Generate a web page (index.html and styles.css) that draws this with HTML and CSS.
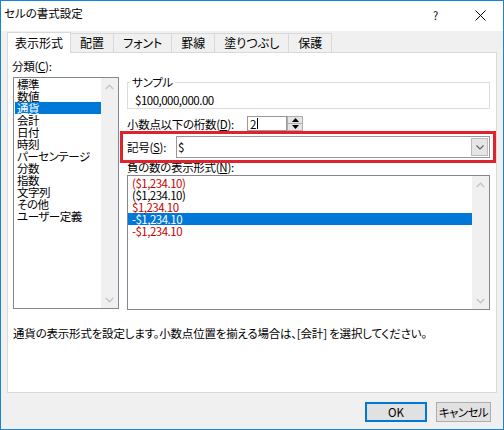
FILE: index.html
```html
<!DOCTYPE html>
<html lang="ja">
<head>
<meta charset="utf-8">
<title>セルの書式設定</title>
<link rel="stylesheet" href="styles.css">
</head>
<body>
<div class="window">
  <div class="titlebar">
    <span class="title">セルの書式設定</span>
    <span class="tb-btn help">?</span>
    <span class="tb-btn close"><svg width="11" height="11" viewBox="0 0 11 11"><path d="M0.5 0.5 L10.5 10.5 M10.5 0.5 L0.5 10.5" stroke="#000" stroke-width="1" fill="none"/></svg></span>
  </div>
  <div class="client">
    <div class="tabs">
      <div class="tab active">表示形式</div>
      <div class="tab">配置</div>
      <div class="tab">フォント</div>
      <div class="tab">罫線</div>
      <div class="tab">塗りつぶし</div>
      <div class="tab">保護</div>
    </div>
    <div class="panel">
      <div class="panel-main">
        <div class="col-left">
          <div class="label">分類(<u>C</u>):</div>
          <div class="listbox cat-list">
            <div class="items">
              <div class="item">標準</div>
              <div class="item">数値</div>
              <div class="item selected">通貨</div>
              <div class="item">会計</div>
              <div class="item">日付</div>
              <div class="item">時刻</div>
              <div class="item">パーセンテージ</div>
              <div class="item">分数</div>
              <div class="item">指数</div>
              <div class="item">文字列</div>
              <div class="item">その他</div>
              <div class="item">ユーザー定義</div>
            </div>
            <div class="scrollbar">
              <span class="arrow"><svg width="9" height="6" viewBox="0 0 9 6"><path d="M0.8 5 L4.5 1.3 L8.2 5" stroke="#c4c4c4" stroke-width="1.4" fill="none"/></svg></span>
              <span class="arrow"><svg width="9" height="6" viewBox="0 0 9 6"><path d="M0.8 1 L4.5 4.7 L8.2 1" stroke="#c4c4c4" stroke-width="1.4" fill="none"/></svg></span>
            </div>
          </div>
        </div>
        <div class="col-right">
          <fieldset class="sample">
            <legend>サンプル</legend>
            <div class="sample-value num">$100,000,000.00</div>
          </fieldset>
          <div class="row decimals">
            <span class="row-label decimals-label">小数点以下の桁数(<u>D</u>):</span>
            <div class="spin-input">2<span class="caret"></span></div>
            <div class="spin-buttons">
              <span class="spin-btn"><svg width="7" height="4" viewBox="0 0 7 4"><path d="M0 4 L3.5 0 L7 4 Z" fill="#000"/></svg></span>
              <span class="spin-btn"><svg width="7" height="4" viewBox="0 0 7 4"><path d="M0 0 L3.5 4 L7 0 Z" fill="#000"/></svg></span>
            </div>
          </div>
          <div class="row symbol highlight">
            <span class="row-label symbol-label">記号(<u>S</u>):</span>
            <div class="combo">
              <span class="combo-text">$</span>
              <span class="combo-btn"><svg width="8" height="5" viewBox="0 0 8 5"><path d="M0.5 0.5 L4 4 L7.5 0.5" stroke="#606060" stroke-width="1.1" fill="none"/></svg></span>
            </div>
          </div>
          <div class="label neg-label">負の数の表示形式(<u>N</u>):</div>
          <div class="listbox neg-list">
            <div class="items">
              <div class="item num red">($1,234.10)</div>
              <div class="item num">($1,234.10)</div>
              <div class="item num red">$1,234.10</div>
              <div class="item num selected">-$1,234.10</div>
              <div class="item num red">-$1,234.10</div>
            </div>
            <div class="scrollbar">
              <span class="arrow"><svg width="9" height="6" viewBox="0 0 9 6"><path d="M0.8 5 L4.5 1.3 L8.2 5" stroke="#c4c4c4" stroke-width="1.4" fill="none"/></svg></span>
              <span class="arrow"><svg width="9" height="6" viewBox="0 0 9 6"><path d="M0.8 1 L4.5 4.7 L8.2 1" stroke="#c4c4c4" stroke-width="1.4" fill="none"/></svg></span>
            </div>
          </div>
        </div>
      </div>
      <div class="desc">通貨の表示形式を設定します。小数点位置を揃える場合は、[会計] を選択してください。</div>
    </div>
    <div class="buttons">
      <button class="btn default">OK</button>
      <button class="btn cancel">キャンセル</button>
    </div>
  </div>
</div>
</body>
</html>
```

FILE: styles.css
```css
* { box-sizing: border-box; }
html, body { margin: 0; padding: 0; }
body {
  width: 504px;
  height: 430px;
  overflow: hidden;
  background: #fff;
  color: #000;
  font-family: "Noto Sans CJK JP", "Noto Sans", sans-serif;
  font-size: 12px;
  line-height: 12px;
  font-feature-settings: "palt";
}
u { text-decoration: underline; text-underline-offset: 1px; }

.window {
  width: 504px;
  height: 430px;
  border: 1px solid #1883d7;
  background: #f0f0f0;
  display: flex;
  flex-direction: column;
}

.titlebar {
  flex: none;
  height: 30px;
  background: #fff;
  display: flex;
  align-items: flex-start;
}
.title { flex: 1; padding: 6px 0 0 3px; font-size: 11.5px; }
.tb-btn {
  width: 45px;
  height: 28px;
  display: flex;
  align-items: center;
  justify-content: center;
}
.help { font-size: 11px; }

.client { flex: 1; display: flex; flex-direction: column; }

.tabs {
  height: 21px;
  padding-left: 6px;
  display: flex;
  align-items: flex-end;
}
.tab {
  height: 19px;
  padding: 0 9px;
  border: 1px solid #d9d9d9;
  border-left: none;
  border-bottom: none;
  background: #f0f0f0;
  line-height: 17px;
  white-space: nowrap;
}
.tab.active {
  height: 21px;
  margin-bottom: -1px;
  padding: 0 7px;
  border-left: 1px solid #d9d9d9;
  background: #fff;
  line-height: 19px;
  position: relative;
  z-index: 2;
}

.panel {
  margin-left: 6px;
  width: 490px;
  height: 341px;
  background: #fff;
  border: 1px solid #d9d9d9;
  font-size: 11.5px;
  letter-spacing: -0.3px;
}
.panel-main { display: flex; align-items: flex-start; }

.col-left { width: 111px; padding: 7px 0 0 4px; }
.label { height: 12px; white-space: nowrap; }

.listbox {
  display: flex;
  background: #fff;
  border: 1px solid #828790;
}
.items { flex: 1; min-width: 0; }
.item { height: 12px; white-space: nowrap; }
.item.selected { background: #0078d7; color: #fff; }
.item.red { color: #c80000; }
.num { letter-spacing: -0.5px; }

.scrollbar {
  width: 17px;
  background: #f0f0f0;
  display: flex;
  flex-direction: column;
  justify-content: space-between;
}
.arrow {
  height: 17px;
  display: flex;
  align-items: center;
  justify-content: center;
}

.cat-list {
  margin: 5px 0 0 1px;
  width: 106px;
  height: 232px;
}
.cat-list .item { margin-left: 1px; padding-left: 2px; letter-spacing: -0.5px; }

.col-right { width: 363px; margin-left: 8px; padding-top: 23px; }

.sample {
  margin: 0;
  min-width: 0;
  padding: 6px 7px 2px 7px;
  border: 1px solid #dcdcdc;
}
.sample legend {
  padding: 0 2px;
  margin-left: -5px;
  line-height: 12px;
}
.sample-value { height: 12px; }

.row { display: flex; align-items: center; }
.row-label { white-space: nowrap; }

.decimals { margin-top: 7px; height: 15px; }
.decimals-label { width: 120px; }
.spin-input {
  width: 40px;
  height: 15px;
  border: 1px solid #999;
  padding-left: 2px;
  display: flex;
  align-items: center;
  background: #fff;
}
.caret { width: 1px; height: 11px; background: #000; margin-left: 1px; }
.spin-buttons {
  width: 16px;
  height: 15px;
  display: flex;
  flex-direction: column;
  border: 1px solid #adadad;
  background: #e5e5e5;
}
.spin-btn {
  flex: 1;
  display: flex;
  align-items: center;
  justify-content: center;
}
.spin-btn + .spin-btn { border-top: 1px solid #adadad; }

.highlight {
  position: relative;
  z-index: 1;
  height: 32px;
  margin: 0 -6px 0 -7px;
  padding: 0 3px 0 4px;
  border: 3px solid #e0222c;
}
.symbol-label { width: 49px; }
.combo {
  flex: 1;
  height: 22px;
  display: flex;
  border: 1px solid #999;
  background: #fff;
}
.combo-text { flex: 1; padding-left: 1px; line-height: 20px; }
.combo-btn {
  width: 17px;
  margin: 1px;
  border: 1px solid #bcbcbc;
  background: #e6e6e6;
  display: flex;
  align-items: center;
  justify-content: center;
}

.neg-label { margin-top: -2px; }
.neg-list { margin-top: 2px; height: 135px; }
.neg-list .items { padding-top: 1px; }
.neg-list .item { padding-left: 4px; }

.desc { margin-top: 17px; padding-left: 5px; height: 12px; white-space: nowrap; letter-spacing: -0.2px; }

.buttons {
  display: flex;
  justify-content: flex-end;
  gap: 9px;
  padding: 9px 12px 0 0;
}
.btn {
  height: 20px;
  padding: 0;
  font: inherit;
  font-size: 11.5px;
  font-feature-settings: "palt";
  color: #000;
  background: #e1e1e1;
  border: 1px solid #adadad;
  line-height: 12px;
  white-space: nowrap;
}
.btn.default { width: 62px; border: 2px solid #0078d7; }
.btn.cancel { width: 55px; letter-spacing: -0.6px; }
```
